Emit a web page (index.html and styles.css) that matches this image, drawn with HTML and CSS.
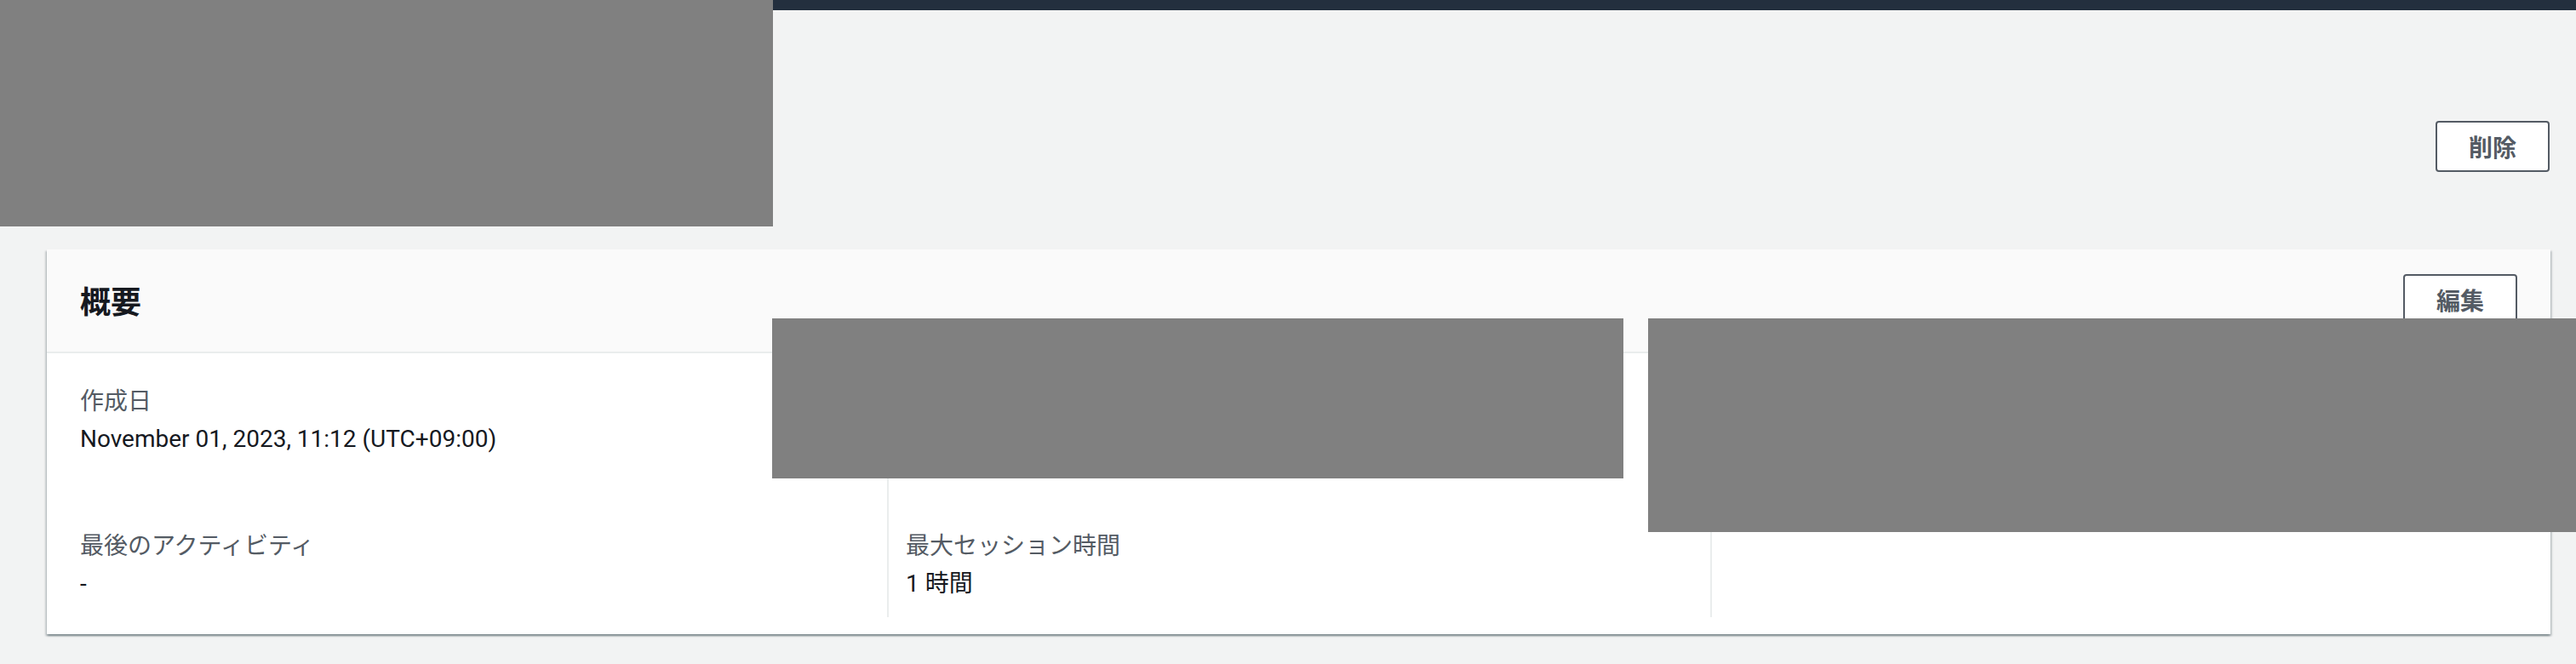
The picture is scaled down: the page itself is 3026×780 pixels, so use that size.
FILE: index.html
```html
<!DOCTYPE html>
<html lang="ja">
<head>
    <meta charset="UTF-8">
    <meta name="viewport" content="width=device-width, initial-scale=1.0">
    <title>概要</title>
    <link rel="stylesheet" href="styles.css">
</head>
<body>
    <div class="top-nav"></div>

    <main class="content">
        <div class="page-header">
            <button class="btn">削除</button>
        </div>

        <section class="container">
            <div class="container-header">
                <h2>概要</h2>
                <button class="btn">編集</button>
            </div>
            <div class="container-body">
                <div class="kv-grid">
                    <div class="kv first">
                        <div class="kv-label">作成日</div>
                        <div class="kv-value">November 01, 2023, 11:12 (UTC+09:00)</div>
                    </div>
                    <div class="kv">
                        <div class="kv-label">&nbsp;</div>
                        <div class="kv-value">&nbsp;</div>
                    </div>
                    <div class="kv">
                        <div class="kv-label">&nbsp;</div>
                        <div class="kv-value">&nbsp;</div>
                    </div>
                    <div class="kv first last">
                        <div class="kv-label">最後のアクティビティ</div>
                        <div class="kv-value">-</div>
                    </div>
                    <div class="kv last">
                        <div class="kv-label">最大セッション時間</div>
                        <div class="kv-value">1 時間</div>
                    </div>
                    <div class="kv last">
                        <div class="kv-label">&nbsp;</div>
                        <div class="kv-value">&nbsp;</div>
                    </div>
                </div>
            </div>
        </section>
    </main>

    <!-- redacted areas -->
    <div class="redact redact-title"></div>
    <div class="redact redact-mid"></div>
    <div class="redact redact-right"></div>
</body>
</html>
```

FILE: styles.css
```css
* {
    margin: 0;
    padding: 0;
    box-sizing: border-box;
}

body {
    position: relative;
    min-height: 100vh;
    background: #f2f3f3;
    color: #16191f;
    font-family: Roboto, "Noto Sans CJK JP", sans-serif;
    font-size: 28px;
    line-height: 44px;
}

.top-nav {
    height: 12px;
    background: #232f3e;
}

.content {
    padding: 0 30px 0 55px;
}

.page-header {
    display: flex;
    justify-content: flex-end;
    padding: 130px 1px 0 0;
}

.btn {
    height: 60px;
    width: 134px;
    background: #fff;
    border: 2px solid #545b64;
    border-radius: 4px;
    color: #545b64;
    font-family: "Noto Sans CJK JP", sans-serif;
    font-size: 28px;
    font-weight: bold;
    cursor: pointer;
}

.container {
    margin-top: 91px;
    background: #fff;
    box-shadow: 0 2px 2px 0 rgba(0, 28, 36, 0.3),
                2px 2px 2px 0 rgba(0, 28, 36, 0.15),
                -2px 2px 2px 0 rgba(0, 28, 36, 0.15);
}

.container-header {
    display: flex;
    justify-content: space-between;
    align-items: center;
    padding: 29px 39px 31px 39px;
    background: #fafafa;
    border-bottom: 2px solid #eaeded;
}

.container-header h2 {
    font-family: "Noto Sans CJK JP", sans-serif;
    font-size: 36px;
    font-weight: bold;
    line-height: 60px;
}

.container-body {
    padding: 35px 40px 20px 39px;
}

.kv-grid {
    display: grid;
    grid-template-columns: 948px 967px 1fr;
}

.kv {
    padding: 0 0 82px 20px;
    border-left: 2px solid #eaeded;
}

.kv.first {
    padding-left: 0;
    border-left: none;
}

.kv.last {
    padding-bottom: 17px;
}

.kv-label {
    color: #545b64;
}

.kv-value {
    color: #16191f;
}

.redact {
    position: absolute;
    background: #808080;
}

.redact-title {
    left: 0;
    top: 0;
    width: 908px;
    height: 266px;
}

.redact-mid {
    left: 907px;
    top: 374px;
    width: 1000px;
    height: 188px;
}

.redact-right {
    left: 1936px;
    top: 374px;
    width: 1090px;
    height: 251px;
}
```
